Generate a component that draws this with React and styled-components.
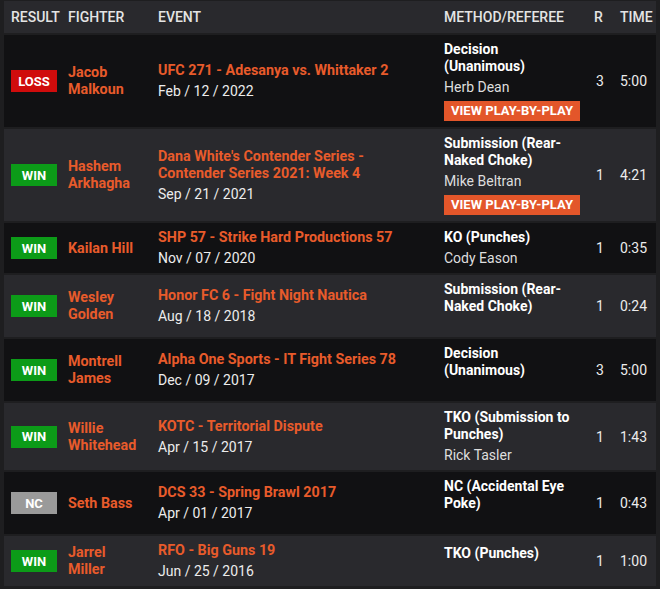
import React from "react";
import styled, { createGlobalStyle } from "styled-components";

const Global = createGlobalStyle`
  body {
    margin: 0;
    background: #1e1e20;
    font-family: Roboto, "Noto Sans", sans-serif;
  }
`;

const Wrap = styled.div`
  padding: 0 4px;
  background: #1e1e20;
`;

const Table = styled.table`
  width: 652px;
  border-collapse: separate;
  border-spacing: 0 2px;
  margin-top: -1px;
  table-layout: fixed;
`;

const Th = styled.th`
  background: #29292d;
  color: #e4e4e4;
  font-size: 14px;
  font-weight: 500;
  text-transform: uppercase;
  text-align: left;
  height: 32px;
  padding: 0 0 0 ${(p) => p.$pl ?? 6}px;
  white-space: nowrap;
`;

const Row = styled.tr`
  background: ${(p) => (p.$alt ? "#29292d" : "#111113")};
`;

const Td = styled.td`
  padding: 6px ${(p) => p.$pr ?? 0}px 6px ${(p) => p.$pl ?? 6}px;
  vertical-align: middle;
  font-size: 14px;
  color: #ececec;
`;

const Badge = styled.span`
  display: inline-flex;
  align-items: center;
  justify-content: center;
  width: 46px;
  height: 22px;
  font-size: 13px;
  font-weight: 700;
  color: #fff;
  background: ${(p) =>
    p.$res === "loss" ? "#d00c0c" : p.$res === "nc" ? "#9a9a9a" : "#0c9b18"};
`;

const Orange = styled.div`
  color: #e85b2b;
  font-weight: 700;
  font-size: 14.3px;
  line-height: 17px;
`;

const EventDate = styled.div`
  color: #ececec;
  margin-top: 4px;
  line-height: 17px;
`;

const Method = styled.div`
  color: #fff;
  font-weight: 700;
  line-height: 17px;
`;

const Referee = styled.div`
  color: #dedede;
  margin-top: 4px;
  line-height: 17px;
  min-height: 12px;
`;

const PlayButton = styled.div`
  display: inline-block;
  margin-top: 5px;
  height: 20px;
  line-height: 20px;
  width: 136px;
  text-align: center;
  background: #e3562a;
  color: #fff;
  font-size: 13px;
  font-weight: 700;
  white-space: nowrap;
`;

const fights = [
  { res: "loss", label: "LOSS", name: "Jacob Malkoun", event: "UFC 271 - Adesanya vs. Whittaker 2", date: "Feb / 12 / 2022", method: "Decision (Unanimous)", ref: "Herb Dean", pbp: true, r: 3, time: "5:00" },
  { res: "win", label: "WIN", name: "Hashem Arkhagha", event: "Dana White's Contender Series - Contender Series 2021: Week 4", date: "Sep / 21 / 2021", method: "Submission (Rear-Naked Choke)", ref: "Mike Beltran", pbp: true, r: 1, time: "4:21" },
  { res: "win", label: "WIN", name: "Kailan Hill", event: "SHP 57 - Strike Hard Productions 57", date: "Nov / 07 / 2020", method: "KO (Punches)", ref: "Cody Eason", r: 1, time: "0:35" },
  { res: "win", label: "WIN", name: "Wesley Golden", event: "Honor FC 6 - Fight Night Nautica", date: "Aug / 18 / 2018", method: "Submission (Rear-Naked Choke)", ref: "", r: 1, time: "0:24" },
  { res: "win", label: "WIN", name: "Montrell James", event: "Alpha One Sports - IT Fight Series 78", date: "Dec / 09 / 2017", method: "Decision (Unanimous)", ref: "", r: 3, time: "5:00" },
  { res: "win", label: "WIN", name: "Willie Whitehead", event: "KOTC - Territorial Dispute", date: "Apr / 15 / 2017", method: "TKO (Submission to Punches)", ref: "Rick Tasler", r: 1, time: "1:43" },
  { res: "nc", label: "NC", name: "Seth Bass", event: "DCS 33 - Spring Brawl 2017", date: "Apr / 01 / 2017", method: "NC (Accidental Eye Poke)", ref: "", r: 1, time: "0:43" },
  { res: "win", label: "WIN", name: "Jarrel Miller", event: "RFO - Big Guns 19", date: "Jun / 25 / 2016", method: "TKO (Punches)", ref: "", r: 1, time: "1:00" },
];

export default function App() {
  return (
    <Wrap>
      <Global />
      <Table>
        <colgroup>
          <col style={{ width: 58 }} />
          <col style={{ width: 90 }} />
          <col style={{ width: 286 }} />
          <col style={{ width: 152 }} />
          <col style={{ width: 24 }} />
          <col style={{ width: 42 }} />
        </colgroup>
        <thead>
          <tr>
            <Th $pl={7}>Result</Th>
            <Th>Fighter</Th>
            <Th>Event</Th>
            <Th>Method/Referee</Th>
            <Th $pl={4}>R</Th>
            <Th $pl={6}>Time</Th>
          </tr>
        </thead>
        <tbody>
          {fights.map((f, i) => (
            <Row key={i} $alt={i % 2 === 1}>
              <Td $pl={7}>
                <Badge $res={f.res}>{f.label}</Badge>
              </Td>
              <Td $pr={8}>
                <Orange>{f.name}</Orange>
              </Td>
              <Td $pr={40}>
                <Orange>{f.event}</Orange>
                <EventDate>{f.date}</EventDate>
              </Td>
              <Td $pr={8}>
                <Method>{f.method}</Method>
                <Referee>{f.ref}</Referee>
                {f.pbp && <PlayButton>VIEW PLAY-BY-PLAY</PlayButton>}
              </Td>
              <Td $pl={6}>{f.r}</Td>
              <Td $pl={6}>{f.time}</Td>
            </Row>
          ))}
        </tbody>
      </Table>
    </Wrap>
  );
}
